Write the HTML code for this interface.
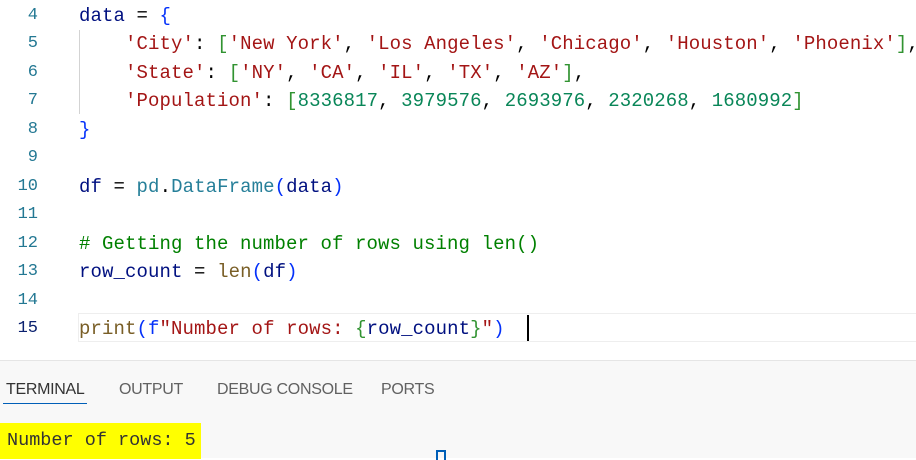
<!DOCTYPE html>
<html><head><style>
body{margin:0;width:916px;height:457px;overflow:hidden;background:#fff;position:relative;font-family:"Liberation Mono",monospace}
.ln{position:absolute;left:0;width:38px;text-align:right;color:#237893;font-size:17px}
.c{position:absolute;left:79px;font-size:19px;letter-spacing:0.1px;white-space:pre;color:#001080;line-height:28px}
.v{color:#001080}.s{color:#a31515}.g{color:#319331}.b{color:#0431fa}.n{color:#098658}.f{color:#795e26}.t{color:#267f99}.cm{color:#008000}.k{color:#000}
.guide{position:absolute;left:79px;top:30px;width:1px;height:84px;background:#d3d3d3}
.hl{position:absolute;left:78px;top:313px;width:840px;height:27px;border:1px solid #eee;border-right:none}
.panel{position:absolute;left:0;top:360px;width:916px;height:97px;background:#f8f8f8;border-top:1px solid #e5e5e5}
.tab{position:absolute;top:20px;font-family:"Liberation Sans",sans-serif;font-size:16px;color:#616161;letter-spacing:-0.3px}
</style></head><body>
<div class="guide"></div>
<div class="hl"></div>
<div class="ln" style="top:6px">4</div>
<div class="ln" style="top:34px">5</div>
<div class="ln" style="top:63px">6</div>
<div class="ln" style="top:91px">7</div>
<div class="ln" style="top:120px">8</div>
<div class="ln" style="top:148px">9</div>
<div class="ln" style="top:177px">10</div>
<div class="ln" style="top:205px">11</div>
<div class="ln" style="top:234px">12</div>
<div class="ln" style="top:262px">13</div>
<div class="ln" style="top:291px">14</div>
<div class="ln" style="top:319px;color:#0b216f">15</div>
<div class="c" style="top:2px">data <span class="k">=</span> <span class="b">{</span></div>
<div class="c" style="top:30px">    <span class="s">'City'</span><span class="k">:</span> <span class="g">[</span><span class="s">'New York'</span><span class="k">,</span> <span class="s">'Los Angeles'</span><span class="k">,</span> <span class="s">'Chicago'</span><span class="k">,</span> <span class="s">'Houston'</span><span class="k">,</span> <span class="s">'Phoenix'</span><span class="g">]</span><span class="k">,</span></div>
<div class="c" style="top:59px">    <span class="s">'State'</span><span class="k">:</span> <span class="g">[</span><span class="s">'NY'</span><span class="k">,</span> <span class="s">'CA'</span><span class="k">,</span> <span class="s">'IL'</span><span class="k">,</span> <span class="s">'TX'</span><span class="k">,</span> <span class="s">'AZ'</span><span class="g">]</span><span class="k">,</span></div>
<div class="c" style="top:87px">    <span class="s">'Population'</span><span class="k">:</span> <span class="g">[</span><span class="n">8336817</span><span class="k">,</span> <span class="n">3979576</span><span class="k">,</span> <span class="n">2693976</span><span class="k">,</span> <span class="n">2320268</span><span class="k">,</span> <span class="n">1680992</span><span class="g">]</span></div>
<div class="c" style="top:116px"><span class="b">}</span></div>
<div class="c" style="top:173px">df <span class="k">=</span> <span class="t">pd</span><span class="k">.</span><span class="t">DataFrame</span><span class="b">(</span>data<span class="b">)</span></div>
<div class="c" style="top:230px"><span class="cm"># Getting the number of rows using len()</span></div>
<div class="c" style="top:258px">row_count <span class="k">=</span> <span class="f">len</span><span class="b">(</span>df<span class="b">)</span></div>
<div class="c" style="top:315px"><span class="f">print</span><span class="b">(</span><span class="b">f</span><span class="s">"Number of rows: </span><span class="g">{</span>row_count<span class="g">}</span><span class="s">"</span><span class="b">)</span></div>
<div style="position:absolute;left:527px;top:315px;width:2px;height:26px;background:#000"></div>
<div class="panel">
<div class="tab" style="left:6px;color:#333">TERMINAL</div>
<div style="position:absolute;left:3px;top:42px;width:84px;height:1px;background:#005fb8"></div>
<div class="tab" style="left:119px">OUTPUT</div>
<div class="tab" style="left:217px">DEBUG CONSOLE</div>
<div class="tab" style="left:381px">PORTS</div>
<div style="position:absolute;left:0;top:62px;width:201px;height:36px;background:#ffff00"></div>
<div style="position:absolute;left:7px;top:69px;font-size:18.5px;color:#333;white-space:pre">Number of rows: 5</div>
<div style="position:absolute;left:436px;top:89px;width:6px;height:8px;border:2px solid #005fb8;border-bottom:none"></div>
</div>
</body></html>
